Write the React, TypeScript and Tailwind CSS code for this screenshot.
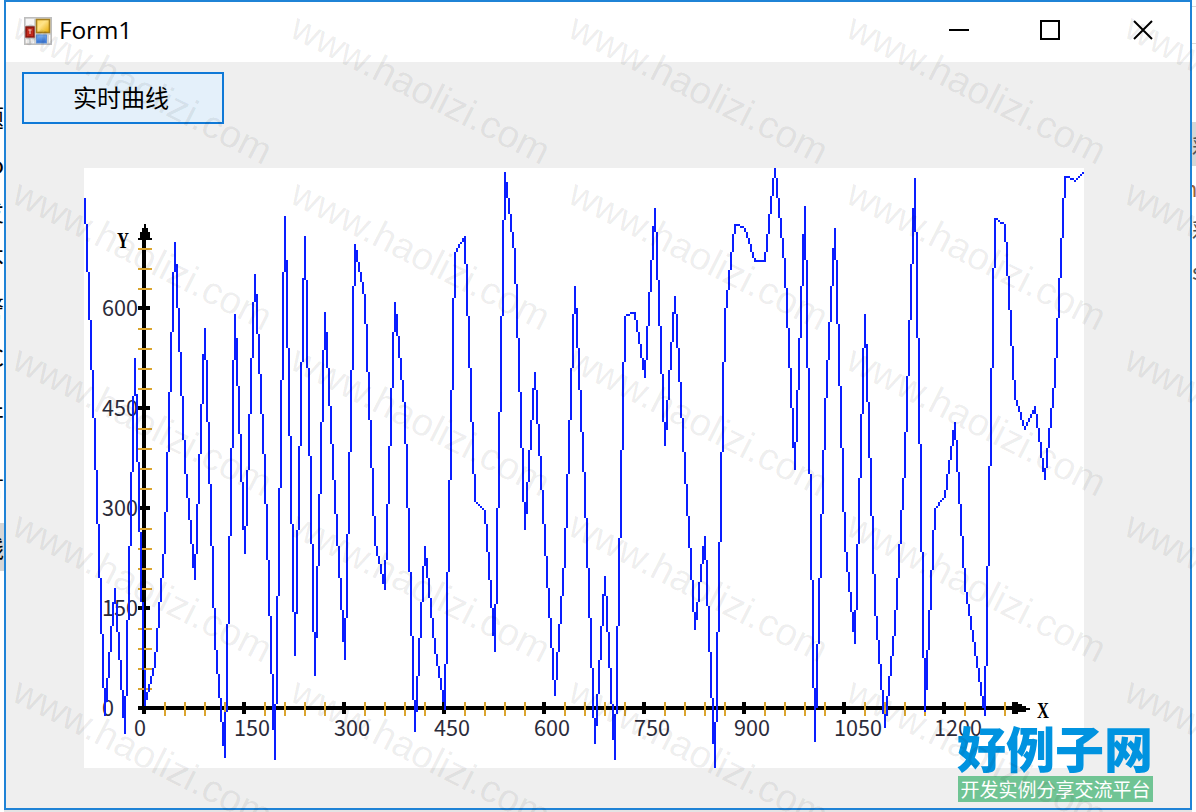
const SAMPLES = [
  15, 137, 273, 210, 282, 95, 268, 248, 186, 37, 147, 205, 80, 235, 294, 73, 192, 53, 153, 295,
  24, 243, 34, 253, 72, 165, 245, 38, 65, 186, 210, 67, 122, 281, 189, 240, 270, 42, 34, 166,
  171, 241, 2, 44, 180, 102, 186, 263, 193, 59, 162, 287, 204, 295, 74, 72, 104, 20, 138, 64,
  150, 230, 184, 299, 74, 28, 30, 46, 46, 0, 50, 150, 19, 286, 124, 30, 187, 237, 73, 217,
  279, 229, 146, 5, 271, 170, 164, 127, 208, 240, 273, 25, 28, 114, 130, 119, 155, 105, 4, 6, 1,
];
const STEP = 5;

// aliased polyline: one vertical run of pixels per column, like a GDI pen
function curvePath(samples: number[]) {
  let d = '';
  for (let k = 0; k < samples.length - 1; k++) {
    const y0 = samples[k];
    const y1 = samples[k + 1];
    for (let i = 0; i <= STEP; i++) {
      const from = y0 + ((y1 - y0) * Math.max(0, i - 0.5)) / STEP;
      const to = y0 + ((y1 - y0) * Math.min(STEP, i + 0.5)) / STEP;
      const lo = Math.min(from, to);
      const hi = Math.max(from, to);
      const lowEnd = Math.max(y0, y1);
      const a = Math.ceil(lo);
      const b = hi === lowEnd ? lowEnd + 1 : Math.ceil(hi);
      const top = b > a ? a : a - 1;
      d += `M${k * STEP + i} ${top}h1V${Math.max(b, top + 1)}h-1z`;
    }
  }
  return d;
}

const Y_LABELS = [{ t: '600', x: 18, y: 148 }, { t: '450', x: 18, y: 248 }, { t: '300', x: 18, y: 348 }, { t: '150', x: 18, y: 448 }, { t: '0', x: 18, y: 548 }];
const X_LABELS = ['0', '150', '300', '450', '600', '750', '900', '1050', '1200'];
const MINOR = [1, 2, 3, 4];

const LEFT_BITS = ['题', 'o', '发', '不', '警', 'C', '开', '言', '线'];
const LEFT_TOPS = ['h-[46px]', 'h-[47px]', 'h-[48px]', 'h-[48px]', 'h-[48px]', 'h-[52px]', 'h-[66px]', 'h-[74px]', 'h-[48px] bg-[#d6d6d6]'];

function LeftStrip() {
  return (
    <div className="w-1 shrink-0 overflow-hidden bg-white pt-[94px] text-[24px] text-black">
      {LEFT_BITS.map((c, i) => (
        <div key={i} className={`flex items-center justify-end overflow-hidden ${LEFT_TOPS[i]}`}><span>{c}</span></div>
      ))}
    </div>
  );
}

function RightStrip() {
  return (
    <div className="w-1 shrink-0 overflow-hidden bg-white text-[22px] text-[#555]">
      <div className="mt-[6px] h-[38px] border-y border-[#d9d9d9]" />
      <div className="mt-[78px] flex h-[44px] items-center overflow-hidden bg-[#d6d6d6]"><span>彩</span></div>
      <div className="flex h-[42px] items-center overflow-hidden"><span className="-ml-2 text-[#a0623a]">n</span></div>
      <div className="flex h-[40px] items-center overflow-hidden"><span>彩</span></div>
      <div className="flex h-[44px] items-center overflow-hidden"><span>s</span></div>
    </div>
  );
}

function FormIcon() {
  return (
    <svg className="mt-[2px] h-[28px] w-[28px]" viewBox="0 0 28 28">
      <defs>
        <linearGradient id="gold" x1="0" y1="0" x2="1" y2="1"><stop offset="0" stopColor="#ffd75a" /><stop offset="0.4" stopColor="#ffe48a" /><stop offset="1" stopColor="#e5a800" /></linearGradient>
        <linearGradient id="blue" x1="0" y1="0" x2="0" y2="1"><stop offset="0" stopColor="#7db1f2" /><stop offset="1" stopColor="#2f6dd0" /></linearGradient>
      </defs>
      <rect x="0.8" y="0.8" width="26.4" height="26.4" fill="#f6f6f6" stroke="#bdbdbd" strokeWidth="1.6" />
      <path d="M2 9h9M6 21v6M11 2v25M2 21.5h9M24 18v9M12 17h15" stroke="#c4c4c4" strokeWidth="1.4" />
      <rect x="12.5" y="2.5" width="13" height="13" fill="url(#gold)" stroke="#a8801c" strokeWidth="1.6" />
      <rect x="2" y="10" width="8" height="10" fill="#c42a1c" stroke="#85160f" strokeWidth="1.4" />
      <path d="M4.5 13h3M6 13v4" stroke="#f3b3a8" strokeWidth="1.4" />
      <rect x="12.5" y="18" width="10" height="8" fill="url(#blue)" stroke="#5d8fd6" />
    </svg>
  );
}

function TitleBar() {
  return (
    <div className="flex h-[60px] shrink-0 items-center bg-white pb-1 pl-[18px] text-black">
      <FormIcon />
      <span className="ml-[7px] font-['Open_Sans',sans-serif] text-[24.5px] leading-none tracking-[-0.2px]">Form1</span>
      <svg className="ml-auto mr-[37px] h-[20px] w-[204px]" viewBox="0 0 204 20" fill="none" stroke="#000" strokeWidth="2">
        <path d="M0 10h20" />
        <rect x="92" y="1" width="18" height="18" />
        <path d="M185 1l18 18M203 1l-18 18" />
      </svg>
    </div>
  );
}

function Chart() {
  return (
    <svg className="mt-[44px] ml-[62px] h-[600px] w-[1000px] bg-white" viewBox="0 0 1000 600">
      <g fontFamily="'Noto Sans CJK SC', sans-serif" fontSize="22" fill="#2b2b3a">
        {Y_LABELS.map((l) => (<text key={l.t} x={l.x} y={l.y} textLength={l.t.length * 12} lengthAdjust="spacingAndGlyphs">{l.t}</text>))}
        {X_LABELS.map((t, i) => (<text key={t} x={50 + i * 100} y={568} textLength={t.length * 12} lengthAdjust="spacingAndGlyphs">{t}</text>))}
      </g>
      <g fontFamily="'Liberation Serif', serif" fontSize="24" fontWeight="bold" fill="#000">
        <text x="33" y="80" textLength="12" lengthAdjust="spacingAndGlyphs">Y</text>
        <text x="953" y="550" textLength="12" lengthAdjust="spacingAndGlyphs">X</text>
      </g>
      <g shapeRendering="crispEdges">
        <path d="M58 70h4v472h-4zM54 538h874v4H54z" fill="#000" />
        {[0, 1, 2, 3, 4].map((n) => (<rect key={n} x="54" y={138 + n * 100} width="12" height="4" fill="#000" />))}
        {[0, 1, 2, 3, 4, 5, 6, 7, 8].map((n) => (<rect key={n} x={58 + n * 100} y="534" width="4" height="12" fill="#000" />))}
        {[0, 1, 2, 3, 4].map((n) => MINOR.map((m) => {
          const y = 540 - n * 100 - m * 20;
          return y >= 80 ? <rect key={`${n}-${m}`} x="54" y={y} width="14" height="2" fill="#daa530" /> : null;
        }))}
        {[0, 1, 2, 3, 4, 5, 6, 7, 8].map((n) => MINOR.map((m) => {
          const x = 60 + n * 100 + m * 20;
          return x <= 920 ? <rect key={`${n}-${m}`} x={x} y="534" width="2" height="14" fill="#daa530" /> : null;
        }))}
        <path d="M60 56h2v4h2v4h2v6h2v2H54v-2h2v-6h2v-4h2z" fill="#000" />
        <path d="M928 534h6v2h4v2h4v2h4v2h-4v2h-8v2h-6z" fill="#000" />
        <path d={curvePath(SAMPLES)} transform="scale(2)" fill="#0a1eff" />
      </g>
    </svg>
  );
}

function SiteLogo() {
  return (
    <div className="absolute left-[957px] top-[722px] w-[196px] font-['Noto_Sans_CJK_SC',sans-serif]">
      <div className="flex h-[54px] items-start text-[49px] font-black leading-none text-[#0093e0]">
        <span className="whitespace-nowrap">好例子网</span>
      </div>
      <div className="ml-px flex h-[26px] items-center justify-center whitespace-nowrap bg-[#70c494] pb-[2px] text-[19px] leading-none text-white">开发实例分享交流平台</div>
    </div>
  );
}

function Watermark() {
  return (
    <svg className="pointer-events-none absolute inset-0 h-[812px] w-[1196px]" viewBox="0 0 1196 812">
      <g fontFamily="'Liberation Sans', sans-serif" fontSize="38.5" fill="#000" fillOpacity="0.075">
        {[0, 1, 2, 3, 4].map((r) => [0, 1, 2, 3, 4].map((c) => (
          <text key={`${r}-${c}`} transform={`translate(${10 + c * 278} ${36 + r * 166}) rotate(27)`}>www.haolizi.com</text>
        )))}
      </g>
    </svg>
  );
}

export default function App() {
  return (
    <div className="relative flex h-[812px] w-[1196px] overflow-hidden bg-[#e4e4e4] font-['Noto_Sans_CJK_SC',sans-serif]">
      <LeftStrip />
      <div className="flex h-[810px] w-[1188px] shrink-0 flex-col border-2 border-[#1f83d6] bg-[#efefef]">
        <TitleBar />
        <div className="px-4 pt-[10px]">
          <button type="button" className="flex h-[52px] w-[202px] items-center justify-center border-2 border-[#0f79d7] bg-[#e4f0fa] pr-1 pb-[2px] text-[24px] leading-none text-black">实时曲线</button>
          <Chart />
        </div>
      </div>
      <RightStrip />
      <SiteLogo />
      <Watermark />
    </div>
  );
}
